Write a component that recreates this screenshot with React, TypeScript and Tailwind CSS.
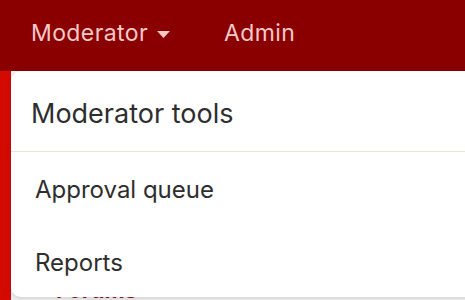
export default function App() {
  return (
    <div className="relative h-[300px] w-[465px] overflow-hidden bg-white font-['Inter','Noto_Sans',sans-serif]">
      {/* Top nav */}
      <div className="flex h-[71px] items-start bg-[#8a0000] pl-[31px] pt-[16px] text-[23px] tracking-[0.4px] text-[#f6c9c9]">
        <div className="flex items-center gap-[9px]">
          <span>Moderator</span>
          <svg width="13" height="7" viewBox="0 0 13 7" className="mt-[2px]">
            <path d="M0 0h13L6.5 7z" fill="#f6c9c9" />
          </svg>
        </div>
        <span className="ml-[54px]">Admin</span>
      </div>

      {/* Page body behind the menu */}
      <div className="flex h-[229px]">
        <div className="w-[11px] bg-[#d40a00]" />
        <div className="flex flex-1 flex-col justify-end bg-[#f3f3f3] pl-[45px]">
          <div className="text-[22px] font-bold leading-[20px] text-[#9b1010]">Forums</div>
        </div>
      </div>

      {/* Dropdown */}
      <div className="absolute left-[11px] top-[71px] h-[226px] w-[470px] rounded-[10px] bg-white shadow-[0_2px_6px_rgba(0,0,0,0.15)]">
        <div className="flex h-[81px] items-center border-b border-[#e8e6d4] pl-[20px] pt-[6px] text-[27px] text-[#2e2e2e]">
          Moderator tools
        </div>
        <div className="flex h-[72px] items-center pl-[24px] pt-[4px] text-[24px] text-[#2e2e2e]">Approval queue</div>
        <div className="flex h-[72px] items-center pl-[24px] pt-[6px] text-[24px] text-[#2e2e2e]">Reports</div>
      </div>
    </div>
  );
}
